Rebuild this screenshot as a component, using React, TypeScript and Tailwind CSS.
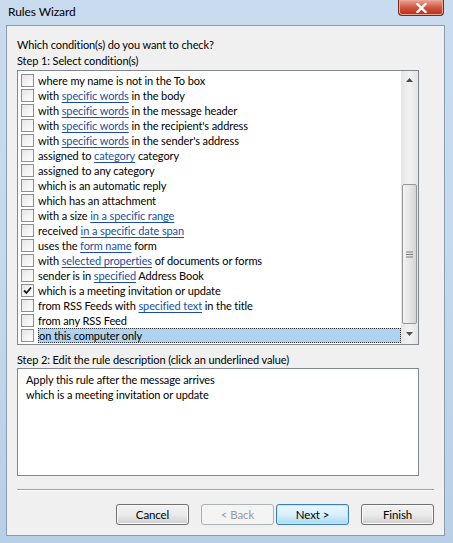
import React from "react";

type Part = string | { link: string };
const rows: { parts: Part[]; checked?: boolean; selected?: boolean }[] = [
  { parts: ["where my name is not in the To box"] },
  { parts: ["with ", { link: "specific words" }, " in the body"] },
  { parts: ["with ", { link: "specific words" }, " in the message header"] },
  { parts: ["with ", { link: "specific words" }, " in the recipient's address"] },
  { parts: ["with ", { link: "specific words" }, " in the sender's address"] },
  { parts: ["assigned to ", { link: "category" }, " category"] },
  { parts: ["assigned to any category"] },
  { parts: ["which is an automatic reply"] },
  { parts: ["which has an attachment"] },
  { parts: ["with a size ", { link: "in a specific range" }] },
  { parts: ["received ", { link: "in a specific date span" }] },
  { parts: ["uses the ", { link: "form name" }, " form"] },
  { parts: ["with ", { link: "selected properties" }, " of documents or forms"] },
  { parts: ["sender is in ", { link: "specified" }, " Address Book"] },
  { parts: ["which is a meeting invitation or update"], checked: true },
  { parts: ["from RSS Feeds with ", { link: "specified text" }, " in the title"] },
  { parts: ["from any RSS Feed"] },
  { parts: ["on this computer only"], selected: true },
];

function Checkbox({ checked }: { checked?: boolean }) {
  return (
    <div className="w-[13px] h-[13px] border border-[#8f8f8f] bg-gradient-to-br from-[#e6e6e6] to-[#ffffff] flex items-center justify-center shrink-0">
      {checked && (
        <svg width="9" height="9" viewBox="0 0 9 9">
          <path d="M1 4.5 L3.5 7 L8 1.5" stroke="#1c1c1c" strokeWidth="1.8" fill="none" />
        </svg>
      )}
    </div>
  );
}

function Btn({ label, kind }: { label: string; kind?: "default" | "disabled" }) {
  const base = "w-[73px] h-[21px] rounded-[3px] border flex items-center justify-center text-[11.5px] leading-[15px]";
  if (kind === "default")
    return (
      <div className={`${base} border-[#3c7fb1] bg-gradient-to-b from-[#eaf6fd] via-[#d9f0fc] to-[#a7d9f5] text-black shadow-[inset_0_0_0_1px_#bfe6fb]`}>
        {label}
      </div>
    );
  if (kind === "disabled")
    return <div className={`${base} border-[#adb2b5] bg-[#f4f4f4] text-[#9a9a9a]`}>{label}</div>;
  return (
    <div className={`${base} border-[#707070] bg-gradient-to-b from-[#f2f2f2] via-[#ebebeb] to-[#cfcfcf] text-black shadow-[inset_0_0_0_1px_#fbfbfb]`}>
      {label}
    </div>
  );
}

export default function App() {
  return (
    <div
      className="w-[453px] h-[543px] flex flex-col bg-gradient-to-b from-[#c9dcef] via-[#c5d9ed] to-[#b9cfe6] text-[11px] tracking-[-0.1px] leading-[15px] text-black overflow-hidden"
      style={{ fontFamily: 'Lato, "Noto Sans", sans-serif' }}
    >
      {/* Title bar */}
      <div className="h-[25px] flex items-start shrink-0">
        <div className="pl-[8px] pt-[4px] text-[12px] text-black leading-[16px]">Rules Wizard</div>
        <div className="flex-1" />
        <div className="mr-[9px] w-[46px] h-[16px] rounded-b-[4px] border border-t-0 border-[#6e2b23] bg-gradient-to-b from-[#e8a493] via-[#cf5641] to-[#b32d16] flex items-center justify-center shadow-[inset_0_0_0_1px_#eea595]">
          <svg width="11" height="10" viewBox="0 0 11 10">
            <path d="M1.5 1 L9.5 9 M9.5 1 L1.5 9" stroke="#ffffff" strokeWidth="2.4" strokeLinecap="square" />
          </svg>
        </div>
      </div>

      {/* Client area */}
      <div className="ml-[6px] mr-[8px] mb-[7px] flex-1 border border-[#8a9bb0] bg-[#f0f0f0] flex flex-col pl-[10px] pr-[10px] pt-[11px]">
        <div className="h-[15px] leading-[15px]">Which condition(s) do you want to check?</div>
        <div className="h-[15px] leading-[15px] mt-[1px]">Step 1: Select condition(s)</div>

        <div className="mt-[2px] w-[402px] h-[275px] border border-[#828790] bg-white flex">
          <div className="flex-1 flex flex-col pt-[2px] pl-[3px]">
            {rows.map((r, i) => (
              <div key={i} className="h-[15px] flex items-center">
                <Checkbox checked={r.checked} />
                <div
                  className={`ml-[4px] h-[15px] leading-[13px] flex items-center whitespace-nowrap ${
                    r.selected ? "flex-1 bg-[#aed2f0] border border-dotted border-[#333]" : ""
                  }`}
                >
                  {r.parts.map((p, j) =>
                    typeof p === "string" ? (
                      <span key={j} className="whitespace-pre">{p}</span>
                    ) : (
                      <span key={j} className="text-[#1a4fa0] underline underline-offset-[2px]">
                        {p.link}
                      </span>
                    )
                  )}
                </div>
              </div>
            ))}
          </div>
          {/* Scrollbar */}
          <div className="w-[17px] bg-gradient-to-r from-[#e5e5e5] via-[#f2f2f2] to-[#e5e5e5] flex flex-col">
            <div className="h-[17px] flex items-center justify-center">
              <svg width="7" height="4" viewBox="0 0 7 4">
                <path d="M0 4 L3.5 0 L7 4 Z" fill="#4d4d4d" />
              </svg>
            </div>
            <div className="h-[96px]" />
            <div className="mx-[1px] h-[140px] rounded-[2px] border border-[#979797] bg-gradient-to-r from-[#f3f3f3] via-[#e6e6e6] to-[#d5d5d5] flex items-center justify-center">
              <svg width="7" height="7" viewBox="0 0 7 7">
                <path d="M0 1 H7 M0 3.5 H7 M0 6 H7" stroke="#7a7a7a" strokeWidth="1" />
              </svg>
            </div>
            <div className="flex-1 flex items-center justify-center">
              <svg width="7" height="4" viewBox="0 0 7 4">
                <path d="M0 0 L3.5 4 L7 0 Z" fill="#4d4d4d" />
              </svg>
            </div>
          </div>
        </div>

        <div className="h-[15px] leading-[15px] mt-[7px]">Step 2: Edit the rule description (click an underlined value)</div>
        <div className="mt-[1px] w-[402px] h-[108px] border border-[#828790] bg-white pl-[8px] pt-[3px]">
          <div className="h-[15px] leading-[15px]">Apply this rule after the message arrives</div>
          <div className="h-[15px] leading-[15px]">which is a meeting invitation or update</div>
        </div>

        <div className="mt-[13px] h-[2px] border-t border-[#a0a0a0] border-b border-b-white" />

        <div className="mt-[13px] flex items-center justify-end">
          <Btn label="Cancel" />
          <div className="w-[12px]" />
          <Btn label="< Back" kind="disabled" />
          <div className="w-[2px]" />
          <Btn label="Next >" kind="default" />
          <div className="w-[12px]" />
          <Btn label="Finish" />
        </div>
      </div>
    </div>
  );
}
